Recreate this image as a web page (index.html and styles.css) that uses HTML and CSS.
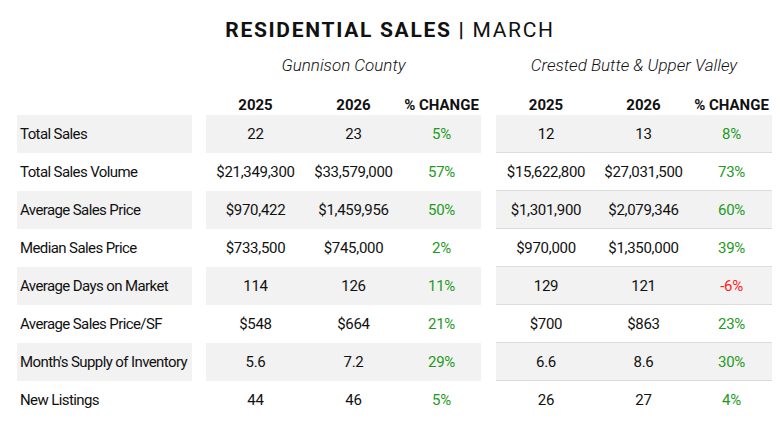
FILE: index.html
```html
<!DOCTYPE html>
<html lang="en">
<head>
<meta charset="utf-8">
<title>Residential Sales | March</title>
<link rel="stylesheet" href="styles.css">
</head>
<body>
<div class="report">
  <h1 class="title"><span class="title-strong">RESIDENTIAL SALES |</span> MARCH</h1>

  <div class="row region-row">
    <div class="label"></div>
    <div class="group group-left region">Gunnison County</div>
    <div class="group group-right region">Crested Butte &amp; Upper Valley</div>
  </div>

  <div class="row col-row">
    <div class="label"></div>
    <div class="group group-left">
      <div class="c c1">2025</div><div class="c c2">2026</div><div class="c c3">% CHANGE</div>
    </div>
    <div class="group group-right">
      <div class="c c1">2025</div><div class="c c2">2026</div><div class="c c3">% CHANGE</div>
    </div>
  </div>

  <div class="row data alt">
    <div class="label">Total Sales</div>
    <div class="group group-left"><div class="c c1">22</div><div class="c c2">23</div><div class="c c3 up">5%</div></div>
    <div class="group group-right"><div class="c c1">12</div><div class="c c2">13</div><div class="c c3 up">8%</div></div>
  </div>
  <div class="row data">
    <div class="label">Total Sales Volume</div>
    <div class="group group-left"><div class="c c1">$21,349,300</div><div class="c c2">$33,579,000</div><div class="c c3 up">57%</div></div>
    <div class="group group-right"><div class="c c1">$15,622,800</div><div class="c c2">$27,031,500</div><div class="c c3 up">73%</div></div>
  </div>
  <div class="row data alt">
    <div class="label">Average Sales Price</div>
    <div class="group group-left"><div class="c c1">$970,422</div><div class="c c2">$1,459,956</div><div class="c c3 up">50%</div></div>
    <div class="group group-right"><div class="c c1">$1,301,900</div><div class="c c2">$2,079,346</div><div class="c c3 up">60%</div></div>
  </div>
  <div class="row data">
    <div class="label">Median Sales Price</div>
    <div class="group group-left"><div class="c c1">$733,500</div><div class="c c2">$745,000</div><div class="c c3 up">2%</div></div>
    <div class="group group-right"><div class="c c1">$970,000</div><div class="c c2">$1,350,000</div><div class="c c3 up">39%</div></div>
  </div>
  <div class="row data alt">
    <div class="label">Average Days on Market</div>
    <div class="group group-left"><div class="c c1">114</div><div class="c c2">126</div><div class="c c3 up">11%</div></div>
    <div class="group group-right"><div class="c c1">129</div><div class="c c2">121</div><div class="c c3 down">-6%</div></div>
  </div>
  <div class="row data">
    <div class="label">Average Sales Price/SF</div>
    <div class="group group-left"><div class="c c1">$548</div><div class="c c2">$664</div><div class="c c3 up">21%</div></div>
    <div class="group group-right"><div class="c c1">$700</div><div class="c c2">$863</div><div class="c c3 up">23%</div></div>
  </div>
  <div class="row data alt">
    <div class="label">Month's Supply of Inventory</div>
    <div class="group group-left"><div class="c c1">5.6</div><div class="c c2">7.2</div><div class="c c3 up">29%</div></div>
    <div class="group group-right"><div class="c c1">6.6</div><div class="c c2">8.6</div><div class="c c3 up">30%</div></div>
  </div>
  <div class="row data last">
    <div class="label">New Listings</div>
    <div class="group group-left"><div class="c c1">44</div><div class="c c2">46</div><div class="c c3 up">5%</div></div>
    <div class="group group-right"><div class="c c1">26</div><div class="c c2">27</div><div class="c c3 up">4%</div></div>
  </div>
</div>
</body>
</html>
```

FILE: styles.css
```css
html, body {
  margin: 0;
  padding: 0;
  background: #ffffff;
}

body {
  font-family: "Roboto", "Liberation Sans", sans-serif;
  color: #111111;
  font-size: 15px;
}

.report {
  width: 780px;
  padding-left: 17px;
  box-sizing: border-box;
}

.title {
  margin: 0;
  padding-top: 17px;
  height: 50px;
  box-sizing: border-box;
  text-align: center;
  font-size: 21px;
  line-height: 26px;
  font-weight: 400;
  letter-spacing: 1.7px;
  padding-right: 17px;
}

.title-strong {
  font-weight: 700;
}

.row {
  display: flex;
  gap: 14px;
}

.label {
  width: 175px;
  flex: none;
  padding-left: 3px;
  box-sizing: border-box;
  display: flex;
  align-items: center;
  white-space: nowrap;
  letter-spacing: -0.6px;
}

.group {
  display: flex;
  align-items: center;
  flex: none;
}

.group-left {
  width: 275px;
}

.group-right {
  width: 276px;
  margin-left: 1px;
}

.region-row {
  height: 30px;
}

.region {
  justify-content: center;
  font-style: italic;
  font-weight: 300;
  font-size: 17px;
}

.col-row {
  height: 35px;
  align-items: flex-end;
  font-weight: 700;
}

.col-row .group {
  padding-bottom: 1px;
}

.c {
  text-align: center;
  white-space: nowrap;
}

.data .c {
  letter-spacing: -0.3px;
}

.group-left .c1 { width: 99px; }
.group-left .c2 { width: 97px; }
.group-left .c3 { width: 79px; }

.group-right .c1 { width: 100px; }
.group-right .c2 { width: 95px; }
.group-right .c3 { width: 81px; }

.data {
  height: 38px;
}

.data .group-right {
  border-bottom: 1px solid #dcdcdc;
  box-sizing: border-box;
}

.data.last .group-right {
  border-bottom: none;
}

.alt .label,
.alt .group {
  background: #f2f2f2;
}

.up {
  color: #1e9a1e;
}

.down {
  color: #ff1a1a;
}
```
